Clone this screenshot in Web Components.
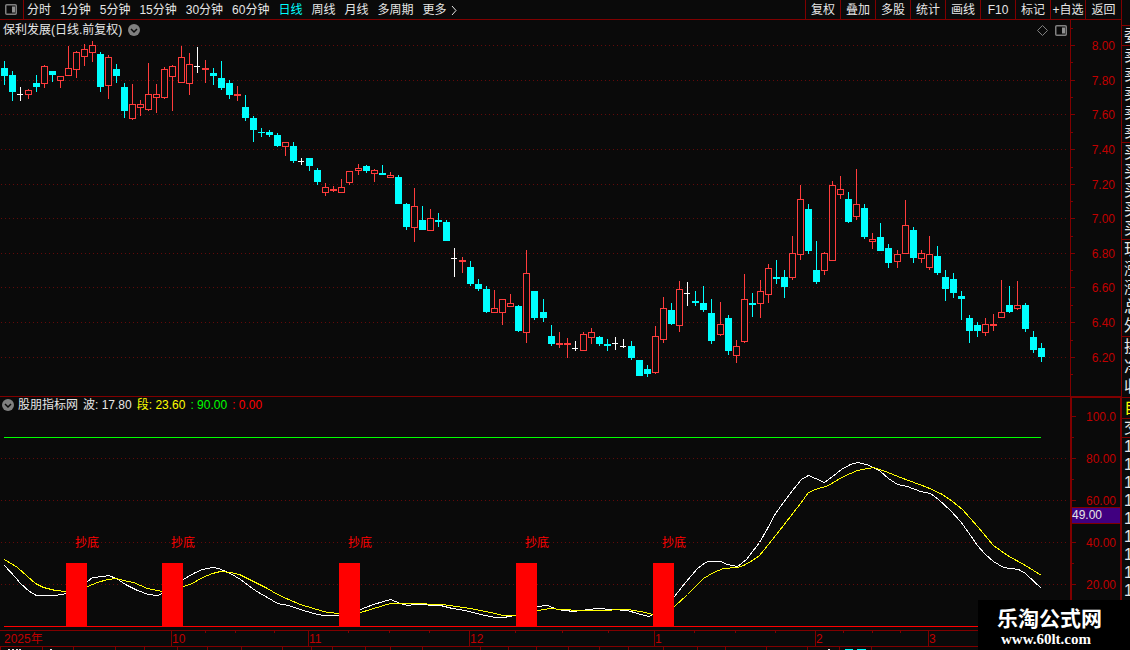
<!DOCTYPE html>
<html lang="zh-CN">
<head>
<meta charset="utf-8">
<title>保利发展 日线</title>
<style>
  body {
    margin: 0;
    background: #0a0a0a;
    color: #e6e6e6;
    font: 12px/16px "Liberation Sans", "Noto Sans CJK SC", sans-serif;
    --line: #800000;
    --label: #c00000;
    --up: #ff3c3c;
    --down: #00ffff;
    overflow: hidden;
  }
</style>
</head>
<body>
<stock-terminal></stock-terminal>

<script>
// one entry per day: kind, high, body top, body bottom, low
const CANDLES = `
d 61 68 76 85|d 71 75 92 101|w 87 94 95 101|u 89 90 95 99|d 75 83 87 92|u 65 66 84 88|d 71 71 75 82|u 76 76 81 88
u 46 68 76 76|u 51 52 70 78|u 44 49 57 66|u 41 45 53 62|d 52 54 87 92|u 55 57 86 99|d 64 69 76 83|d 83 87 111 118
u 84 104 119 120|u 100 104 108 116|u 63 94 110 111|u 84 94 98 113|u 67 69 98 99|u 65 66 77 111|u 46 57 83 83|u 53 64 84 95
w 47 66 67 73|u 60 68 70 83|d 68 73 76 85|d 61 78 88 90|d 80 83 95 99|u 86 94 96 101|d 95 107 118 121|d 116 118 130 142
d 128 132 133 137|d 130 132 135 137|d 133 135 146 147|u 142 142 147 156|d 142 146 161 163|w 158 161 162 165|d 158 158 166 171|d 168 170 182 185
u 183 187 193 196|u 186 189 191 192|u 179 187 193 193|u 171 171 183 185|u 164 168 171 175|d 165 166 171 173|u 169 170 174 182|d 165 173 175 175
u 172 175 178 178|d 175 177 204 204|d 203 204 227 230|u 188 206 228 242|d 206 220 230 230|u 209 218 231 231|d 213 220 222 227|d 220 222 241 241
w 248 258 259 277|u 257 260 262 273|d 261 267 284 286|d 279 284 289 291|d 286 289 312 313|u 290 308 313 313|u 299 299 313 325|u 294 303 307 307
d 305 306 331 332|u 250 273 333 343|d 291 291 318 320|d 299 312 318 322|d 325 336 344 346|u 332 343 345 348|u 338 343 345 358|w 341 348 349 351
u 332 334 351 351|u 328 332 338 344|d 336 337 344 346|d 339 344 346 351|w 337 343 344 350|w 339 346 347 348|d 341 346 358 360|d 360 360 376 376
d 365 369 374 377|u 326 336 373 374|u 297 308 340 343|d 303 310 324 325|u 281 289 326 332|w 282 293 294 306|d 291 301 303 306|d 286 303 310 312
d 299 313 341 344|u 302 324 335 336|d 315 318 351 355|u 340 346 356 363|u 274 299 342 343|d 293 303 305 317|u 280 291 304 318|u 264 268 295 303
d 260 277 279 284|d 270 277 287 298|u 236 253 278 280|u 185 199 255 260|d 204 209 251 254|d 241 270 282 284|u 252 253 271 275|u 181 185 261 261
u 176 189 195 199|d 192 199 222 223|u 169 204 217 220|d 204 208 237 239|u 233 239 242 249|d 223 237 251 251|d 244 248 263 268|u 250 254 262 268
u 200 225 254 254|d 227 230 258 263|u 250 253 259 263|u 236 254 268 270|d 246 256 273 275|d 270 277 289 301|d 273 279 293 298|d 291 296 299 320
d 315 318 331 343|d 322 325 331 337|u 318 324 333 336|u 314 324 326 331|u 280 312 318 318|d 286 305 312 313|u 281 305 309 310|d 303 305 329 332
d 331 337 350 353|d 343 348 357 362`.trim().split(/[|\n]/).map(row => row.split(' '));

const WAVE = `4,565 15,577 20,583 29,591 36,595 55,595 66,593 87,581 92,577 103,576 108,575 116,578 125,584 137,590 148,594 157,595 162,593
183,579 193,573 202,569 212,567 218,568 230,573 240,579 252,588 258,592 267,597 277,603 288,605 300,609 313,613 323,615 339,615
360,609 373,604 390,599 400,603 407,605 415,604 440,605 452,608 465,610 480,614 495,617 503,617 515,615 537,606 547,605 557,609
573,611 597,608 627,610 637,613 648,616 653,614 674,596 685,582 697,568 705,562 708,561 720,561 727,564 737,566 746,559 759,542
767,528 775,513 783,502 792,490 801,479 808,475 815,478 824,482 832,476 841,469 850,464 857,462 866,464 873,467 880,471 888,478
897,484 907,486 920,491 930,493 938,499 950,510 960,521 968,532 977,545 985,554 993,561 1003,567 1018,569 1025,573 1041,588`;

const SEGMENT = `4,559 17,567 27,576 35,583 43,587 55,590 66,591 87,586 97,582 107,579 116,578 123,580 133,582 147,588 162,591
183,586 192,583 202,577 212,573 220,571 230,572 239,574 253,581 267,588 277,594 288,599 300,604 313,608 327,612 339,613
360,612 370,609 383,605 390,603 410,603 442,604 470,608 490,612 503,615 515,615 537,610 550,608 560,609 580,610 597,610 627,609
640,611 653,614 674,606 687,594 703,578 713,572 723,568 737,567 743,565 752,560 759,555 768,544 783,525 800,503 808,492 815,489
828,485 843,476 857,470 873,467 885,471 900,477 927,487 942,494 952,501 962,509 977,526 993,545 1007,555 1025,565 1041,575`;

const PRICE_ROWS = [45, 80, 114, 149, 184, 218, 253, 287, 322, 357];
const BASE_WIDTH = 1070;

const chevron = `<svg width="12" height="12" viewBox="0 0 12 12"><circle cx="6" cy="6" r="6" fill="#808080"/><path d="M3 5l3 3 3-3" fill="none" stroke="#0a0a0a" stroke-width="1.5"/></svg>`;
const panelIcon = `<svg width="12" height="11" viewBox="0 0 12 11"><rect x=".75" y=".75" width="10.5" height="9.5" rx="1" fill="none" stroke="#808080" stroke-width="1.5"/><path d="M7 2.5h3v6H7z" fill="#909090"/></svg>`;

const rect = (x, y, w, h, fill) => `<rect x="${x}" y="${y}" width="${w}" height="${h}" style="fill:${fill}"/>`;

// Base for everything whose x positions stretch with the window
class ScaledChart extends HTMLElement {
  constructor() {
    super();
    this.attachShadow({ mode: 'open' });
  }

  connectedCallback() {
    this._observer = new ResizeObserver(() => this._render());
    this._observer.observe(this);
    this._render();
  }

  disconnectedCallback() {
    this._observer.disconnect();
  }

  _render() {
    const width = this.clientWidth || BASE_WIDTH;
    const base = this.constructor.baseWidth || BASE_WIDTH;
    const { top, height } = this.constructor;
    this._x = value => Math.round(value * width / base);
    this.shadowRoot.innerHTML = `
      <style>
        :host { display: block; }
        svg { display: block; width: 100%; }
        text { font: 12px "Liberation Sans", "Noto Sans CJK SC", sans-serif; }
      </style>
      <svg height="${height}" viewBox="0 ${top} ${width} ${height}" shape-rendering="crispEdges">${this._draw(width)}</svg>`;
  }

  _dots(rows, width) {
    return rows.map(y => `<path d="M1 ${y + 0.5}H${width - 2}" stroke="#640a0a" stroke-dasharray="1 3"/>`).join('');
  }
}

class PriceChart extends ScaledChart {
  static top = 40;
  static height = 356;

  _draw(width) {
    const bars = CANDLES.map(([kind, ...values], i) => {
      const [high, top, bottom, low] = values.map(Number);
      const x = this._x(4 + 8 * i + Math.floor((i + 1) / 22.4));
      if (kind === 'w') {
        return rect(x, high, 1, low - high, '#fff') + rect(x - 3, top, 6, 1, '#fff');
      }
      if (kind === 'd') {
        return rect(x, high, 1, low - high, 'var(--down)') + rect(x - 3, top, 7, bottom - top, 'var(--down)');
      }
      return rect(x, high, 1, top - high, 'var(--up)') + rect(x, bottom, 1, low - bottom, 'var(--up)')
        + rect(x - 3, top, 7, bottom - top, 'var(--up)')
        + (bottom - top > 2 ? rect(x - 2, top + 1, 5, bottom - top - 2, '#0a0a0a') : '');
    });
    return this._dots(PRICE_ROWS, width) + bars.join('');
  }
}
customElements.define('price-chart', PriceChart);

class IndicatorChart extends ScaledChart {
  static top = 415;
  static height = 215;

  _curve(points, color) {
    const scaled = points.split(/\s+/).map(p => {
      const [x, y] = p.split(',');
      return this._x(x) + ',' + y;
    });
    return `<polyline transform="translate(.5 .5)" points="${scaled.join(' ')}" fill="none" stroke="${color}"/>`;
  }

  _draw(width) {
    const start = this._x(4);
    const signals = [66, 162, 339, 516, 653].map(x =>
      rect(this._x(x), 563, 21, 63, '#f00') + `<text x="${this._x(x) + 9}" y="547" fill="#f00">抄底</text>`);
    return this._dots([458, 500, 542, 584], width)
      + rect(start, 437, this._x(1041) - start, 1, '#00ff00')
      + this._curve(WAVE, '#fff') + this._curve(SEGMENT, '#ff0')
      + rect(start, 626, width - start, 1, '#f00')
      + signals.join('');
  }
}
customElements.define('indicator-chart', IndicatorChart);

class TimeAxis extends ScaledChart {
  static top = 630;
  static height = 20;
  static baseWidth = 1121;

  _draw(width) {
    const line = 'var(--line)';
    const months = [['10', 171], ['11', 308], ['12', 469], ['1', 654], ['2', 815], ['3', 928]];
    const minor = [205, 235, 274, 348, 389, 429, 515, 562, 608, 694, 735, 775, 843, 872, 900];
    const tabs = [0, 42, 73, 115, 144, 177, 207, 241, 282, 311, 332, 365, 390, 422, 480, 508, 536, 568, 599, 628, 663, 697, 725, 766, 807, 839, 871];
    return rect(0, 630, width, 1, line) + rect(0, 646, width, 1, line)
      + `<text x="4" y="643" style="fill:var(--label)">2025年</text>`
      + months.map(([name, x]) => rect(this._x(x), 631, 1, 15, line)
        + `<text x="${this._x(x) + 1}" y="643" style="fill:var(--label)">${name}</text>`).join('')
      + minor.map(x => rect(this._x(x), 631, 1, 2, line)).join('')
      + tabs.map(x => rect(this._x(x), 647, 1, 3, line)).join('')
      + [8, 12, 16, 19, 50, 828].map(x => rect(this._x(x), 649, 2, 1, '#e6e6e6')).join('')
      + rect(this._x(845), 649, 8, 1, 'var(--down)') + rect(this._x(857), 649, 9, 1, 'var(--down)');
  }
}
customElements.define('time-axis', TimeAxis);

class ValueAxis extends HTMLElement {
  constructor() {
    super();
    this.attachShadow({ mode: 'open' });
  }

  connectedCallback() {
    const top = Number(this.getAttribute('top'));
    const height = Number(this.getAttribute('height'));
    const labels = this.getAttribute('labels').split(' ').map(item => item.split('@'));
    const minor = this.getAttribute('minor').split(' ');
    const mark = this.getAttribute('mark');
    this.shadowRoot.innerHTML = `
      <style>
        :host { display: block; border-left: 1px solid var(--line); }
        :host([heavy]) { border: solid var(--line); border-width: 1px 1px 0 2px; }
        svg { display: block; }
        text { font: 12px "Liberation Sans", sans-serif; fill: var(--label); }
        .mark { fill: #e6e6e6; }
      </style>
      <svg width="48" height="${height}" viewBox="0 ${top} 48 ${height}" shape-rendering="crispEdges">
        ${labels.map(([text, y]) => rect(0, y, 4, 1, 'var(--line)')
          + `<text x="44" y="${Number(y) + 5}" text-anchor="end">${text}</text>`).join('')}
        ${minor.map(y => rect(0, y, 2, 1, 'var(--line)')).join('')}
        ${mark ? rect(0, 507, 48, 17, 'var(--line)') + rect(0, 508, 48, 15, '#400080')
          + `<text class="mark" x="0" y="519">${mark}</text>` : ''}
      </svg>`;
  }
}
customElements.define('value-axis', ValueAxis);

class PeriodTab extends HTMLElement {
  constructor() {
    super();
    this.attachShadow({ mode: 'open' });
    this.shadowRoot.innerHTML = `
      <style>
        :host { display: block; }
        button {
          display: flex;
          align-items: center;
          justify-content: center;
          width: 100%;
          padding: 0;
          border: 0;
          background: none;
          color: inherit;
          font: inherit;
          line-height: 20px;
          white-space: nowrap;
          cursor: pointer;
        }
        :host([active]) { color: #00ffff; }
      </style>
      <button type="button"><slot></slot></button>`;
  }
}
customElements.define('period-tab', PeriodTab);

class ToolBar extends HTMLElement {
  constructor() {
    super();
    this.attachShadow({ mode: 'open' });
    this.shadowRoot.innerHTML = `
      <style>
        :host {
          display: flex;
          height: 19px;
          border-bottom: 1px solid var(--line);
        }
        .toggle {
          width: 18px;
          padding: 0 0 0 5px;
          border: 0;
          border-right: 1px solid var(--line);
          background: none;
          display: flex;
          align-items: center;
          box-sizing: content-box;
        }
        .periods { display: flex; gap: 9px; padding-left: 3px; flex: 1; }
        .tools { display: flex; }
        .tools period-tab { width: 34px; border-left: 1px solid var(--line); }
        .tools period-tab:last-child { width: 35px; }
        .more { margin-left: 4px; }
      </style>
      <button class="toggle" type="button" aria-label="侧栏">${panelIcon}</button>
      <div class="periods">
        ${['分时', '1分钟', '5分钟', '15分钟', '30分钟', '60分钟', '日线', '周线', '月线', '多周期'].map(name =>
          `<period-tab${name === '日线' ? ' active' : ''}>${name}</period-tab>`).join('')}
        <period-tab>更多<svg class="more" width="6" height="9" viewBox="0 0 6 9"><path d="M1 0l4 4.5L1 9" fill="none" stroke="#e6e6e6"/></svg></period-tab>
      </div>
      <div class="tools">
        ${['复权', '叠加', '多股', '统计', '画线', 'F10', '标记', '+自选', '返回'].map(name => `<period-tab>${name}</period-tab>`).join('')}
      </div>`;
  }
}
customElements.define('tool-bar', ToolBar);

class ChartPane extends HTMLElement {
  constructor() {
    super();
    this.attachShadow({ mode: 'open' });
    this.shadowRoot.innerHTML = `
      <style>
        :host { display: grid; grid-template-columns: 1fr 51px; }
        :host([ruled]) { border-top: 1px solid var(--line); }
        .body { min-width: 0; }
        header {
          display: flex;
          align-items: center;
          height: 20px;
          padding: 0 3px;
          box-sizing: border-box;
        }
        :host([ruled]) header { height: 18px; padding: 0 2px 2px; }
      </style>
      <div class="body">
        <header><slot name="title"></slot></header>
        <slot></slot>
      </div>
      <slot name="axis"></slot>`;
  }
}
customElements.define('chart-pane', ChartPane);

class QuoteStrip extends HTMLElement {
  constructor() {
    super();
    this.attachShadow({ mode: 'open' });
    const groups = [
      ['委', 19], ['卖卖卖卖卖', 19], ['买买买买买', 19], ['现涨涨总外', 19],
      ['换净收', 20], ['自', 20], ['交', 18], ['111111111', 18]
    ];
    this.shadowRoot.innerHTML = `
      <style>
        :host {
          display: block;
          border-left: 1px solid var(--line);
          padding-top: 25px;
          overflow: hidden;
          font-size: 16px;
        }
        div { border-top: 1px solid var(--line); }
        div.five { padding-bottom: 1px; }
        span { display: block; padding-left: 2px; white-space: nowrap; }
        .own { color: #ffff00; }
      </style>
      ${groups.map(([rows, height]) => `<div class="${rows.length === 5 ? 'five' : ''}${rows === '自' ? 'own' : ''}">
        ${[...rows].map(c => `<span style="line-height:${height}px;height:${height}px">${c}</span>`).join('')}</div>`).join('')}`;
  }
}
customElements.define('quote-strip', QuoteStrip);

class SiteMark extends HTMLElement {
  constructor() {
    super();
    this.attachShadow({ mode: 'open' });
    this.shadowRoot.innerHTML = `
      <style>
        :host {
          position: absolute;
          right: 0;
          bottom: 0;
          width: 152px;
          height: 50px;
          box-sizing: border-box;
          padding: 8px 0 0 19px;
          background: #000;
          color: #fff;
          font-weight: bold;
        }
        div { font-size: 21px; line-height: 22px; white-space: nowrap; }
        a {
          display: block;
          padding-left: 4px;
          color: inherit;
          text-decoration: none;
          font: bold 15px/18px "Liberation Serif", serif;
        }
      </style>
      <div>乐淘公式网</div>
      <a href="#">www.60lt.com</a>`;
  }
}
customElements.define('site-mark', SiteMark);

class StockTerminal extends HTMLElement {
  constructor() {
    super();
    this.attachShadow({ mode: 'open' });
    this.shadowRoot.innerHTML = `
      <style>
        :host { display: grid; grid-template-columns: 1fr 9px; position: relative; }
        main { min-width: 0; }
        quote-strip { height: 0; min-height: 100%; box-sizing: border-box; }
        .title { display: flex; align-items: center; gap: 6px; width: 100%; }
        .title .right { margin-left: auto; display: flex; align-items: center; gap: 7px; }
        .values { display: flex; align-items: center; gap: 5px; }
        .values svg { margin-right: -1px; }
        .wave { color: #e6e6e6; }
        .segment { color: #ffff00; }
        .upper { color: #00ff00; }
        .lower { color: #ff0000; }
      </style>
      <main>
        <tool-bar></tool-bar>
        <chart-pane>
          <div class="title" slot="title">
            <span>保利发展(日线.前复权)</span>${chevron}
            <span class="right">
              <svg width="11" height="11" viewBox="0 0 11 11"><path d="M5.5 .5l5 5-5 5-5-5z" fill="none" stroke="#808080"/></svg>
              ${panelIcon}
            </span>
          </div>
          <price-chart></price-chart>
          <value-axis slot="axis" top="20" height="376"
            labels="8.00@45 7.80@80 7.60@114 7.40@149 7.20@184 7.00@218 6.80@253 6.60@287 6.40@322 6.20@357"
            minor="28 62 97 132 167 201 236 270 305 340 374"></value-axis>
        </chart-pane>
        <chart-pane ruled>
          <div class="values" slot="title">
            ${chevron}
            <span>股朋指标网</span>
            <span class="wave">波: 17.80</span>
            <span class="segment">段: 23.60</span>
            <span class="upper">: 90.00</span>
            <span class="lower">: 0.00</span>
          </div>
          <indicator-chart></indicator-chart>
          <value-axis heavy slot="axis" top="398" height="232" mark="49.00"
            labels="100.0@416 80.00@458 60.00@500 40.00@542 20.00@584"
            minor="437 479 521 563 605"></value-axis>
        </chart-pane>
        <time-axis></time-axis>
      </main>
      <quote-strip></quote-strip>
      <site-mark></site-mark>`;
  }
}
customElements.define('stock-terminal', StockTerminal);
</script>
</body>
</html>
